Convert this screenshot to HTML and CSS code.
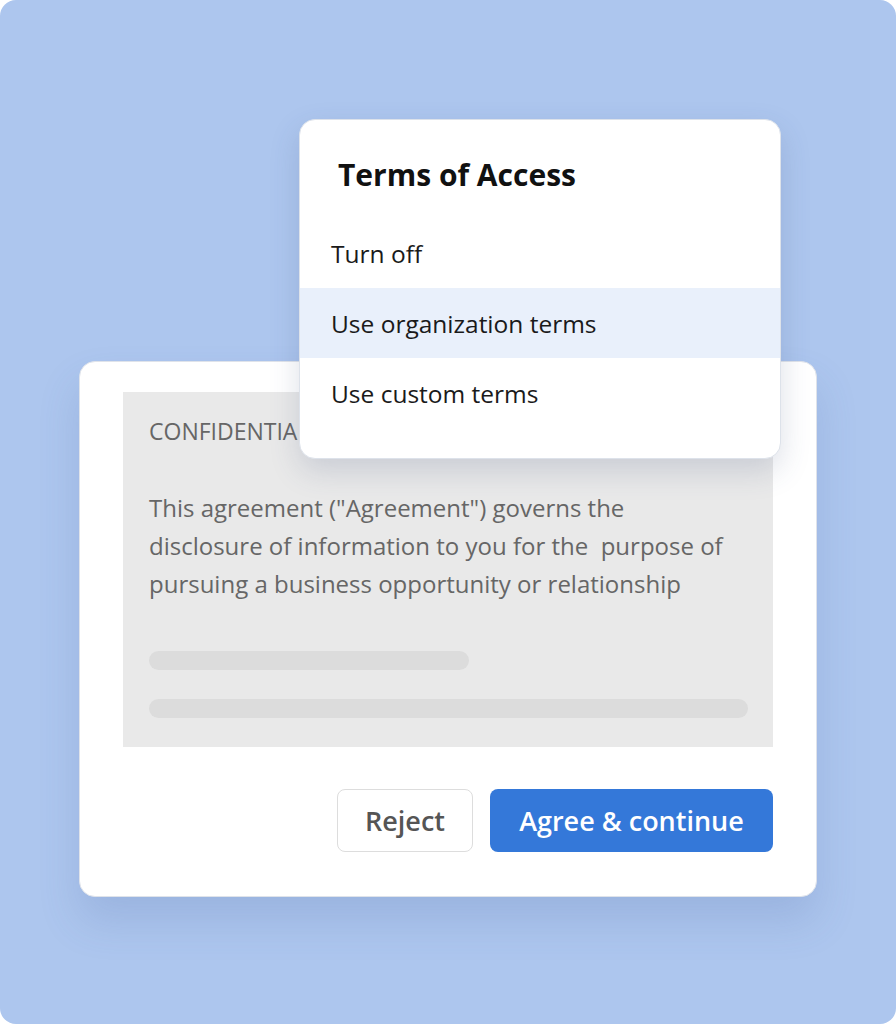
FILE: index.html
```html
<!DOCTYPE html>
<html lang="en">
<head>
<meta charset="utf-8">
<title>Terms of Access</title>
<link rel="stylesheet" href="styles.css">
</head>
<body>
<div class="stage">
  <div class="card">
    <div class="doc">
      <div class="doc-title">CONFIDENTIALITY AGREEMENT</div>
      <p class="doc-text">This agreement ("Agreement") governs the<br>disclosure of information to you for the &nbsp;purpose of<br>pursuing a business opportunity or relationship</p>
      <div class="skel skel-short"></div>
      <div class="skel skel-long"></div>
    </div>
    <div class="actions">
      <button class="btn btn-reject">Reject</button>
      <button class="btn btn-agree">Agree &amp; continue</button>
    </div>
  </div>
  <div class="menu">
    <div class="menu-title">Terms of Access</div>
    <div class="menu-item">Turn off</div>
    <div class="menu-item is-active">Use organization terms</div>
    <div class="menu-item">Use custom terms</div>
  </div>
</div>
</body>
</html>
```
FILE: styles.css
```css
html, body {
  margin: 0;
  padding: 0;
  background: #ffffff;
}
body {
  font-family: "Open Sans", "Noto Sans", sans-serif;
}
.stage {
  position: relative;
  width: 896px;
  height: 1024px;
  background: #adc6ee;
  border-radius: 16px;
  box-sizing: border-box;
  padding: 361px 79px 0 79px;
  overflow: hidden;
}
.card {
  width: 738px;
  box-sizing: border-box;
  background: #ffffff;
  border: 1px solid #dfe3ea;
  border-radius: 16px;
  padding: 30px 43px 44px 43px;
  box-shadow: 0 24px 40px rgba(70, 100, 160, 0.18);
}
.doc {
  background: #e9e9e9;
  height: 355px;
  box-sizing: border-box;
  padding: 23px 26px 0 26px;
}
.doc-title {
  font-size: 23px;
  color: #666666;
  line-height: 32px;
  white-space: nowrap;
}
.doc-text {
  margin: 42px 0 0 0;
  font-size: 24px;
  line-height: 38px;
  color: #666666;
  white-space: nowrap;
}
.skel {
  height: 19px;
  border-radius: 10px;
  background: #dcdcdc;
}
.skel-short {
  width: 320px;
  margin-top: 48px;
}
.skel-long {
  width: 599px;
  margin-top: 29px;
}
.actions {
  display: flex;
  justify-content: flex-end;
  gap: 17px;
  margin-top: 42px;
}
.btn {
  height: 63px;
  box-sizing: border-box;
  border-radius: 8px;
  font-family: inherit;
  font-size: 27px;
  font-weight: 600;
  cursor: pointer;
  padding: 0;
}
.btn-reject {
  width: 136px;
  background: #ffffff;
  border: 1.5px solid #dddddd;
  color: #555555;
}
.btn-agree {
  width: 283px;
  background: #3478d9;
  border: none;
  color: #ffffff;
}
.menu {
  position: absolute;
  left: 299px;
  top: 119px;
  width: 482px;
  height: 340px;
  box-sizing: border-box;
  background: #ffffff;
  border: 1px solid #dde2ea;
  border-radius: 16px;
  padding: 0 0 31px 0;
  box-shadow: 0 12px 30px rgba(60, 80, 120, 0.18);
  overflow: hidden;
}
.menu-title {
  height: 98px;
  box-sizing: border-box;
  padding: 35px 0 0 38px;
  font-size: 30px;
  font-weight: 700;
  color: #111111;
  line-height: 40px;
}
.menu-item {
  height: 70px;
  display: flex;
  align-items: center;
  padding-left: 31px;
  font-size: 24.5px;
  color: #1a1a1a;
}
.menu-item.is-active {
  background: #e9f0fb;
}
```
